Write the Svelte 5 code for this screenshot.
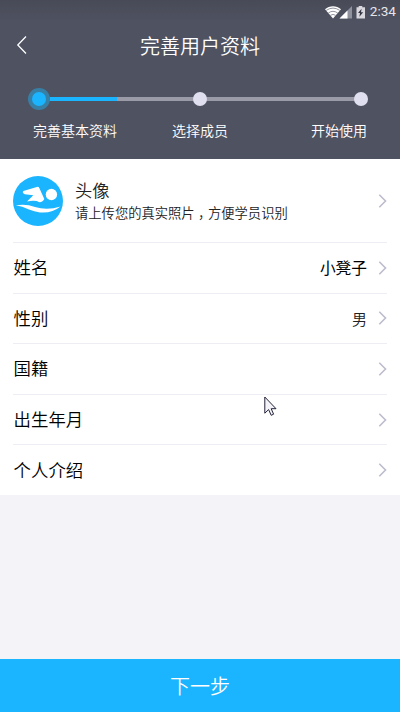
<script lang="ts">
    const steps = ['完善基本资料', '选择成员', '开始使用']

    let rows = $state([
        { label: '姓名', value: '小凳子', strong: true },
        { label: '性别', value: '男', strong: false },
        { label: '国籍', value: '', strong: false },
        { label: '出生年月', value: '', strong: false },
        { label: '个人介绍', value: '', strong: false }
    ])
</script>

{#snippet arrow()}
    <svg class="arrow" width="9" height="16" viewBox="0 0 9 16">
        <path d="M1.3 1.8 L7.5 8 L1.3 14.2" fill="none" stroke="#bdbccd" stroke-width="1.6" />
    </svg>
{/snippet}

<div class="page">
    <header>
        <div class="status">
            <svg width="41" height="16" viewBox="0 0 41 16">
                <path d="M0 5.2 C4.5 1.2 11.5 1.2 16 5.2 L8 14.5 Z" fill="#fff" />
                <path d="M1.2 6.4 Q8 1.8 14.8 6.4 M3.3 9 Q8 5.6 12.7 9 M5.4 11.3 Q8 9.6 10.6 11.3" fill="none" stroke="#777a87" stroke-width=".8" />
                <path d="M14.5 14.5 L27 2 V14.5 Z" fill="#8f919c" />
                <path d="M14.5 14.5 L22.5 6.5 V14.5 Z" fill="#fff" />
                <path d="M31.5 3.2 H33.7 V2 H37.3 V3.2 H40 V14.5 H31.5 Z" fill="#d8d8de" />
                <path d="M36.6 4.8 L33 9 H35 L34.4 12.8 L38.2 8.2 H36 Z" fill="#333540" />
            </svg>
            <span>2:34</span>
        </div>
        <div class="nav">
            <svg class="back" width="12" height="20" viewBox="0 0 12 20">
                <path d="M10 1.5 L1.8 10 L10 18.5" fill="none" stroke="#fff" stroke-width="1.3" />
            </svg>
            <h1>完善用户资料</h1>
        </div>
        <div class="track">
            <div class="bar"><i></i></div>
            <span class="dot active"></span>
            <span class="dot"></span>
            <span class="dot"></span>
        </div>
        <div class="steps">
            {#each steps as step}
                <span>{step}</span>
            {/each}
        </div>
    </header>

    <main>
        <div class="row photo">
            <svg class="avatar" width="50" height="50" viewBox="0 0 50 50">
                <circle cx="25" cy="25" r="25" fill="#1bb4ff" />
                <path d="M10.3 15.1 L23.8 10.9 Q25.6 10.5 26.3 12 L31.3 23 Q30 26 26.5 26.3 Q22 23.8 14 25.6 L20.3 19.2 L11.8 18.3 Q8.8 17 10.3 15.1 Z" fill="#fff" />
                <circle cx="38.4" cy="18.5" r="5.7" fill="#fff" />
                <path d="M2.8 29.3 Q13 27.5 22 31 Q34 34.8 47.5 30.5 Q39 37.5 27 36.4 Q21 35.6 16 33.4 Q9 30 2.8 29.3 Z" fill="#fff" />
            </svg>
            <div class="info">
                <h2>头像</h2>
                <p>请上传您的真实照片<span class="comma">，</span>方便学员识别</p>
            </div>
            {@render arrow()}
        </div>
        {#each rows as row}
            <div class="row">
                <span class="label">{row.label}</span>
                <span class="value" class:strong={row.strong}>{row.value}</span>
                {@render arrow()}
            </div>
        {/each}
    </main>

    <button>下一步</button>

    <svg class="cursor" width="14" height="21" viewBox="0 0 14 21">
        <path d="M.8 1 V17.2 L4.6 13.6 L7.2 19.3 L9.6 18.2 L7.2 12.7 H12 Z" fill="#f4f3f8" stroke="#22223a" stroke-width="1" />
    </svg>
</div>

<style>
    :global(body){
        margin: 0;
        background: #f3f3f8;
    }
    .page{
        position: relative;
        display: flex;
        flex-direction: column;
        height: 712px;
        overflow: hidden;
        font-family: "Noto Sans CJK SC", sans-serif;
        font-weight: 350;
        color: #000;
    }
    header{
        height: 159px;
        background: #4f5261;
        color: #fff;
    }
    .status{
        display: flex;
        justify-content: flex-end;
        align-items: center;
        gap: 4px;
        height: 22px;
        padding-right: 4px;
        font: 13.6px/22px Roboto, sans-serif;
        background: linear-gradient(#484a57, #4f5261);
        svg{
            margin-top: 1px;
        }
        span{
            color: #e6e6ea;
        }
    }
    .nav{
        display: grid;
        grid-template-columns: 40px 1fr 40px;
        align-items: center;
        height: 46px;
    }
    .back{
        margin-left: 16px;
    }
    h1, h2, p{
        margin: 0;
        font-weight: inherit;
    }
    h1{
        font-size: 20px;
        line-height: 44px;
        padding-top: 2px;
        text-align: center;
    }
    .track{
        position: relative;
        display: flex;
        justify-content: space-between;
        align-items: center;
        height: 24px;
        margin: 19px 32px 0 32px;
    }
    .bar{
        position: absolute;
        left: 7px;
        right: 7px;
        top: 10px;
        height: 4px;
        background: #9b9ba8;
        i{
            display: block;
            width: 78px;
            height: 4px;
            background: #1bb4ff;
        }
    }
    .dot{
        position: relative;
        width: 14px;
        height: 14px;
        border-radius: 50%;
        background: #e0dff0;
    }
    .active{
        background: #1bb4ff;
        box-shadow: 0 0 0 4px #387fa5;
    }
    .steps{
        display: grid;
        grid-template-columns: 1fr 1fr 1fr;
        margin: 8px 33px 0;
        font-size: 14px;
        line-height: 22px;
        white-space: nowrap;
        span:nth-child(2){
            text-align: center;
        }
        span:nth-child(3){
            text-align: right;
        }
    }
    main{
        padding: 0 13px;
        background: #fff;
    }
    .row{
        display: flex;
        align-items: center;
        box-sizing: border-box;
        height: 50.6px;
        border-bottom: 1px solid #eeedf4;
        &:last-child{
            height: 50px;
            border-bottom: none;
        }
    }
    .photo{
        height: 84px;
    }
    .info{
        flex: 1;
        margin-left: 12px;
    }
    h2{
        font-size: 17.3px;
        line-height: 24px;
        color: #222;
    }
    p{
        font-size: 13.3px;
        line-height: 22px;
        color: #222;
    }
    .comma{
        display: inline-block;
        width: 1em;
        text-align: center;
        font-feature-settings: "halt";
    }
    .label{
        flex: 1;
        margin-left: .6px;
        padding-bottom: 2px;
        font-size: 17.4px;
    }
    .value{
        margin-right: 11px;
        font-size: 15px;
        color: #222;
    }
    .strong{
        font-size: 15.7px;
        font-weight: 400;
        color: #000;
    }
    button{
        height: 53px;
        margin-top: auto;
        border: none;
        background: #1bb4ff;
        color: #fff;
        font: 350 20px "Noto Sans CJK SC", sans-serif;
    }
    .cursor{
        position: absolute;
        left: 264px;
        top: 396px;
    }
</style>
